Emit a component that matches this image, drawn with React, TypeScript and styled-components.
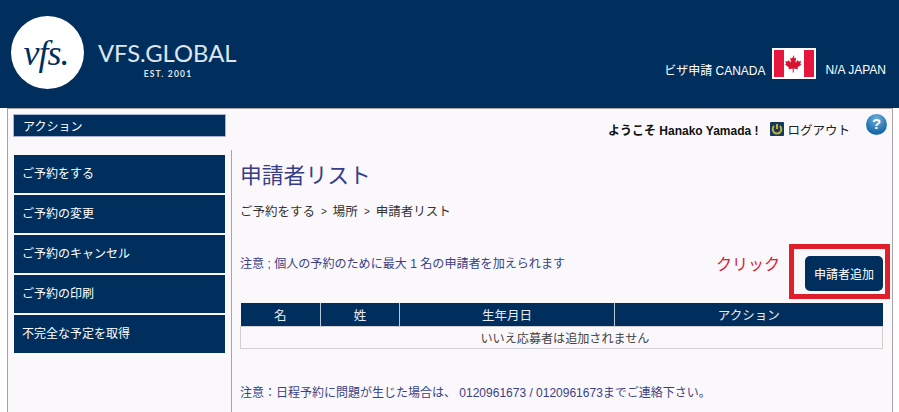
import React from 'react'
import styled, { createGlobalStyle } from 'styled-components'

const navy = '#002f5d'
const FONT = '"Liberation Sans", "Noto Sans CJK JP", sans-serif'

const GlobalStyle = createGlobalStyle`
    html, body {
        margin: 0;
        padding: 0;
        background: #fff;
        font-family: ${FONT};
        overflow: hidden;
    }
`
const Page = styled.div`
    width: 899px;
    height: 412px;
    overflow: hidden;
`
const Header = styled.header`
    height: 108px;
    background: ${navy};
    display: flex;
    justify-content: space-between;
    box-sizing: border-box;
    padding: 16px 13px 0 11px;
`
const Logo = styled.div`
    display: flex;
    align-items: flex-start;
    gap: 14px;
`
const LogoCircle = styled.div`
    width: 73px;
    height: 73px;
    border-radius: 50%;
    background: #fff;
    color: ${navy};
    display: flex;
    align-items: center;
    justify-content: center;
    padding-right: 3px;
    box-sizing: border-box;
    font-family: 'Liberation Serif', serif;
    font-style: italic;
    font-size: 36px;
    letter-spacing: -1px;
`
const LogoText = styled.div`
    display: flex;
    flex-direction: column;
    align-items: center;
    padding-top: 22px;
    color: #dfe5ec;
`
const LogoName = styled.div`
    font-family: Lato, sans-serif;
    font-size: 23.8px;
    line-height: 30px;
    width: 140px;
    white-space: nowrap;
`
const LogoEst = styled.div`
    margin-top: 1px;
    font-family: Lato, sans-serif;
    font-weight: 700;
    font-size: 8.5px;
    line-height: 10px;
    letter-spacing: 1.2px;
`
const Country = styled.div`
    display: flex;
    align-items: center;
    align-self: flex-start;
    margin-top: 32px;
    color: #fff;
    font-size: 12px;
`
const Visa = styled.span`
    margin-right: 6px;
    padding-top: 12px;
`
const Flag = styled.svg`
    width: 44px;
    height: 31px;
    display: block;
    margin-right: 10px;
`
const Location = styled.span`
    padding-top: 12px;
`
const Panel = styled.div`
    margin: 0 6px 0 7px;
    height: 304px;
    box-sizing: border-box;
    border-left: 1px solid #a9a5a6;
    border-right: 1px solid #a9a5a6;
    border-top: 1px solid #a9a5a6;
    background: #faf8fb;
    padding: 5px 5px 0 5px;
    position: relative;
`
const TopRow = styled.div`
    display: flex;
    justify-content: space-between;
    align-items: flex-start;
`
const ActionTitle = styled.div`
    width: 213px;
    height: 23px;
    box-sizing: border-box;
    background: ${navy};
    border: 1px solid #a9b4d0;
    color: #fff;
    font-size: 12px;
    line-height: 24px;
    padding-left: 9px;
`
const UserBar = styled.div`
    display: flex;
    align-items: center;
    height: 30px;
    font-size: 12px;
    color: #111;
`
const Welcome = styled.span`
    font-weight: 700;
    margin-right: 12px;
`
const PowerIcon = styled.svg`
    width: 14px;
    height: 14px;
    margin-right: 3px;
    display: block;
`
const Logout = styled.span`
    font-size: 12.5px;
    color: #222;
    margin-right: 16px;
`
const Help = styled.div`
    width: 21px;
    height: 21px;
    border-radius: 50%;
    background: radial-gradient(circle at 50% 25%, #6fb0de, #1c6ba8 70%);
    color: #fff;
    font-weight: 700;
    font-size: 15px;
    line-height: 20px;
    text-align: center;
    margin-top: -10px;
`
const Body = styled.div`
    display: flex;
    margin-top: 6px;
`
const Sidebar = styled.nav`
    width: 211px;
    padding: 5px 0 0 1px;
    display: flex;
    flex-direction: column;
    gap: 2px;
`
const MenuItem = styled.div`
    height: 38px;
    background: ${navy};
    color: #fff;
    font-size: 12px;
    line-height: 39px;
    padding-left: 8px;
`
const Main = styled.main`
    margin-left: 6px;
    flex: 1;
    border-left: 1px solid #a9a5a6;
    padding-left: 8px;
    height: 270px;
    position: relative;
`
const Title = styled.h1`
    margin: 0;
    padding-top: 12px;
    font-size: 21.8px;
    line-height: 28px;
    font-weight: 400;
    color: #383d88;
`
const Crumbs = styled.div`
    margin-top: 13px;
    font-size: 12.5px;
    line-height: 18px;
    color: #333;
    display: flex;
    gap: 6px;
`
const Sep = styled.span`
    font-size: 10px;
`
const NoteRow = styled.div`
    display: flex;
    align-items: flex-start;
    width: 643px;
    height: 35px;
    margin-top: 35px;
`
const Note = styled.div`
    flex: 1;
    padding-top: 1px;
    font-size: 12.07px;
    line-height: 14px;
    color: #3b3f85;
`
const Click = styled.span`
    color: #d8212f;
    font-size: 16px;
    line-height: 16px;
    margin-right: 25px;
    margin-top: 1px;
`
const AddButton = styled.button`
    width: 78px;
    height: 35px;
    border: 0;
    border-radius: 5px;
    padding: 0;
    background: ${navy};
    color: #fff;
    font-family: ${FONT};
    font-size: 12px;
`
const Highlight = styled.div`
    position: absolute;
    left: 557px;
    top: 94px;
    width: 101px;
    height: 55px;
    box-sizing: border-box;
    border: 5px solid #e01f2d;
`
const Table = styled.table`
    width: 642px;
    margin: 12px 0 0 0;
    border-collapse: collapse;
    table-layout: fixed;
    font-size: 12.5px;
`
const Th = styled.th<{ $w: number }>`
    width: ${(p) => p.$w}px;
    height: 23px;
    padding: 0;
    box-sizing: border-box;
    background: ${navy};
    color: #e6ebf2;
    font-weight: 400;
    border-left: 1px solid #b9c6d6;
    &:first-child {
        border-left: 0;
    }
`
const Td = styled.td`
    height: 22px;
    padding: 0 0 0 7px;
    box-sizing: border-box;
    text-align: center;
    font-size: 12.1px;
    color: #444;
    border: 1px solid #d0d0d0;
`
const Footer = styled.div`
    margin-top: 36px;
    font-size: 12px;
    line-height: 16px;
    color: #3b3f85;
`
const menu = ['ご予約をする', 'ご予約の変更', 'ご予約のキャンセル', 'ご予約の印刷', '不完全な予定を取得']

const columns = [
    { label: '名', width: 80 },
    { label: '姓', width: 79 },
    { label: '生年月日', width: 215 },
    { label: 'アクション', width: 268 },
]

const CanadaFlag = () => (
    <Flag viewBox="0 0 44 31">
        <rect width="44" height="31" fill="#fff" />
        <rect x="2" y="2" width="10" height="27" fill="#e5173f" />
        <rect x="32" y="2" width="10" height="27" fill="#e5173f" />
        <path
            d="M22 7l-2 3.6-1.8-.9.8 5-2.6-2.6-.5 1.4-2.6-.5.8 2.8-1.1.6 3.9 3.2-.5 1.6 4.2-.6.1 3.9h1l.1-3.9 4.2.6-.5-1.6 3.9-3.2-1.1-.6.8-2.8-2.6.5-.5-1.4-2.6 2.6.8-5-1.8.9z"
            fill="#d5152f"
        />
    </Flag>
)

const Power = () => (
    <PowerIcon viewBox="0 0 14 14">
        <rect width="14" height="14" rx="1" fill="#163a5c" />
        <path d="M4.2 4a4.3 4.3 0 1 0 5.6 0" fill="none" stroke="#c0ae3c" strokeWidth="2" />
        <path d="M7 2v5" stroke="#c0ae3c" strokeWidth="2" />
    </PowerIcon>
)

const App: React.FC = () => (
    <Page>
        <GlobalStyle />
        <Header>
            <Logo>
                <LogoCircle>vfs.</LogoCircle>
                <LogoText>
                    <LogoName>VFS.GLOBAL</LogoName>
                    <LogoEst>EST. 2001</LogoEst>
                </LogoText>
            </Logo>
            <Country>
                <Visa>ビザ申請 CANADA</Visa>
                <CanadaFlag />
                <Location>N/A JAPAN</Location>
            </Country>
        </Header>
        <Panel>
            <TopRow>
                <ActionTitle>アクション</ActionTitle>
                <UserBar>
                    <Welcome>ようこそ Hanako Yamada !</Welcome>
                    <Power />
                    <Logout>ログアウト</Logout>
                    <Help>?</Help>
                </UserBar>
            </TopRow>
            <Body>
                <Sidebar>
                    {menu.map((item) => (
                        <MenuItem key={item}>{item}</MenuItem>
                    ))}
                </Sidebar>
                <Main>
                    <Title>申請者リスト</Title>
                    <Crumbs>
                        <span>ご予約をする</span>
                        <Sep>&gt;</Sep>
                        <span>場所</span>
                        <Sep>&gt;</Sep>
                        <span>申請者リスト</span>
                    </Crumbs>
                    <NoteRow>
                        <Note>注意 ; 個人の予約のために最大 1 名の申請者を加えられます</Note>
                        <Click>クリック</Click>
                        <AddButton>申請者追加</AddButton>
                    </NoteRow>
                    <Highlight />
                    <Table>
                        <thead>
                            <tr>
                                {columns.map((c) => (
                                    <Th key={c.label} $w={c.width}>
                                        {c.label}
                                    </Th>
                                ))}
                            </tr>
                        </thead>
                        <tbody>
                            <tr>
                                <Td colSpan={4}>いいえ応募者は追加されません</Td>
                            </tr>
                        </tbody>
                    </Table>
                    <Footer>注意：日程予約に問題が生じた場合は、 0120961673 / 0120961673までご連絡下さい。</Footer>
                </Main>
            </Body>
        </Panel>
    </Page>
)

export default App
